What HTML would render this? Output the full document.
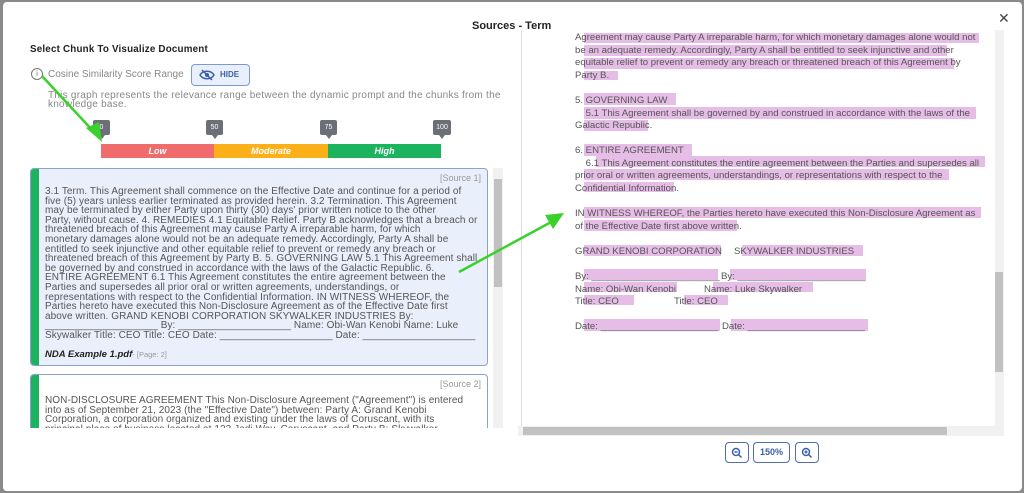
<!DOCTYPE html>
<html><head><meta charset="utf-8"><style>
*{margin:0;padding:0;box-sizing:border-box}
body{width:1024px;height:493px;background:#8a8a8a;position:relative;overflow:hidden;font-family:"Liberation Sans",sans-serif}
.modal{position:absolute;left:3px;top:2px;width:1019px;height:489px;background:#fff;border-radius:4px}
.a{position:absolute;white-space:nowrap}
.card{position:absolute;left:30px;width:458px;border:1px solid #8fa0d0;border-radius:4px;overflow:hidden}
.card .bar{position:absolute;left:0;top:0;bottom:0;width:8px;background:#1cb35e}
.ct{position:absolute;left:14px;font-size:10px;letter-spacing:0.08px;line-height:9.6px;color:#555;white-space:nowrap}
.pdf{font-size:9.6px;color:#555}
.hl{position:absolute;background:#e6bde6}
.btn{position:absolute;top:442px;height:21px;border:1px solid #4f6fb0;border-radius:4px;color:#3b5fa8;font-size:9px;font-weight:bold;text-align:center;line-height:19px}
.pin{position:absolute;top:120px;height:15px;background:#6b6f78;color:#fff;font-size:7px;text-align:center;line-height:15px;border-radius:2px}
.pin:after{content:"";position:absolute;left:50%;margin-left:-3px;bottom:-4px;border:3px solid transparent;border-top:4px solid #6b6f78;border-bottom:0}
</style></head><body>
<div class="modal"></div>
<div class="a" style="left:472px;top:20px;font-size:11px;font-weight:bold;color:#222">Sources - Term</div>
<div class="a" style="left:998px;top:10px;font-size:14px;color:#444">✕</div>

<div class="a" style="left:30px;top:44px;font-size:9.8px;letter-spacing:0.2px;font-weight:bold;color:#222">Select Chunk To Visualize Document</div>
<div class="a" style="left:31px;top:68px;width:12px;height:12px;border:1px solid #777;border-radius:50%;font-size:8px;color:#777;text-align:center;line-height:10px">i</div>
<div class="a" style="left:48px;top:69px;font-size:10px;color:#888">Cosine Similarity Score Range</div>
<div class="a" style="left:191px;top:64px;width:59px;height:22px;border:1px solid #7d9ad0;border-radius:4px;background:#eaf0fb;color:#3b5fa8;font-size:8px;font-weight:bold;line-height:20px;padding-left:28px">HIDE</div>
<svg class="a" style="left:199px;top:69px" width="16" height="12" viewBox="0 0 16 12"><path d="M1 6C4 1 12 1 15 6C12 11 4 11 1 6Z" fill="none" stroke="#3b5fa8" stroke-width="1.5"/><circle cx="8" cy="6" r="2" fill="#3b5fa8"/><path d="M3 1L13 11" stroke="#3b5fa8" stroke-width="1.5"/></svg>
<div class="a" style="left:48px;top:91px;font-size:10px;letter-spacing:0.25px;line-height:9px;color:#888">This graph represents the relevance range between the dynamic prompt and the chunks from the<br>knowledge base.</div>
<div class="pin" style="left:93px;width:17px">0</div>
<div class="pin" style="left:206px;width:17px">50</div>
<div class="pin" style="left:320px;width:17px">75</div>
<div class="pin" style="left:433px;width:18px">100</div>
<div class="a" style="left:101px;top:144px;width:113px;height:14px;background:#f06b6b;color:#fff;font-size:9px;font-weight:bold;font-style:italic;text-align:center;line-height:14px">Low</div>
<div class="a" style="left:214px;top:144px;width:114px;height:14px;background:#fbb019;color:#fff;font-size:9px;font-weight:bold;font-style:italic;text-align:center;line-height:14px">Moderate</div>
<div class="a" style="left:328px;top:144px;width:113px;height:14px;background:#1cb35e;color:#fff;font-size:9px;font-weight:bold;font-style:italic;text-align:center;line-height:14px">High</div>

<div class="card" style="top:168px;height:198px;background:#e9effb"><div class="bar"></div>
<div class="a" style="right:6px;top:4px;font-size:9px;color:#999">[Source 1]</div>
<div class="ct" style="top:18px">3.1 Term. This Agreement shall commence on the Effective Date and continue for a period of<br>five (5) years unless earlier terminated as provided herein. 3.2 Termination. This Agreement<br>may be terminated by either Party upon thirty (30) days' prior written notice to the other<br>Party, without cause. 4. REMEDIES 4.1 Equitable Relief. Party B acknowledges that a breach or<br>threatened breach of this Agreement may cause Party A irreparable harm, for which<br>monetary damages alone would not be an adequate remedy. Accordingly, Party A shall be<br>entitled to seek injunctive and other equitable relief to prevent or remedy any breach or<br>threatened breach of this Agreement by Party B. 5. GOVERNING LAW 5.1 This Agreement shall<br>be governed by and construed in accordance with the laws of the Galactic Republic. 6.<br>ENTIRE AGREEMENT 6.1 This Agreement constitutes the entire agreement between the<br>Parties and supersedes all prior oral or written agreements, understandings, or<br>representations with respect to the Confidential Information. IN WITNESS WHEREOF, the<br>Parties hereto have executed this Non-Disclosure Agreement as of the Effective Date first<br>above written. GRAND KENOBI CORPORATION SKYWALKER INDUSTRIES By:<br>____________________ By: ____________________ Name: Obi-Wan Kenobi Name: Luke<br>Skywalker Title: CEO Title: CEO Date: ____________________ Date: ____________________</div>
<div class="a" style="left:14px;top:180px;font-size:9.5px;color:#222"><b><i>NDA Example 1.pdf</i></b><span style="color:#999;font-size:7.5px">- [Page: 2]</span></div>
</div>
<div class="card" style="top:374px;height:70px;background:#fff"><div class="bar"></div>
<div class="a" style="right:6px;top:4px;font-size:9px;color:#999">[Source 2]</div>
<div class="ct" style="top:21px">NON-DISCLOSURE AGREEMENT This Non-Disclosure Agreement ("Agreement") is entered<br>into as of September 21, 2023 (the "Effective Date") between: Party A: Grand Kenobi<br>Corporation, a corporation organized and existing under the laws of Coruscant, with its<br>principal place of business located at 123 Jedi Way, Coruscant, and Party B: Skywalker</div>
</div>
<div class="a" style="left:3px;top:428px;width:517px;height:63px;background:#fff;border-radius:0 0 0 4px"></div>
<div class="a" style="left:493px;top:168px;width:10px;height:260px;background:#f1f1f1"></div>
<div class="a" style="left:494px;top:179px;width:8px;height:108px;background:#c1c1c1"></div>

<div class="a" style="left:521px;top:30px;width:1px;height:396px;background:#ddd"></div>
<div class="a" style="left:995px;top:30px;width:9px;height:396px;background:#f1f1f1"></div>
<div class="a" style="left:995px;top:272px;width:8px;height:100px;background:#c1c1c1"></div>
<div class="a" style="left:518px;top:426px;width:486px;height:10px;background:#f1f1f1"></div>
<div class="a" style="left:523px;top:427px;width:424px;height:8px;background:#c1c1c1"></div>

<div class="hl" style="left:584px;top:33px;width:395px;height:10px"></div>
<div class="hl" style="left:584px;top:45px;width:363px;height:11px"></div>
<div class="hl" style="left:584px;top:58px;width:370px;height:11px"></div>
<div class="hl" style="left:584px;top:71px;width:34px;height:9px"></div>
<div class="hl" style="left:584px;top:93px;width:92px;height:12px"></div>
<div class="hl" style="left:584px;top:107px;width:392px;height:12px"></div>
<div class="hl" style="left:584px;top:120px;width:64px;height:11px"></div>
<div class="hl" style="left:584px;top:144px;width:108px;height:12px"></div>
<div class="hl" style="left:596px;top:156px;width:389px;height:11px"></div>
<div class="hl" style="left:584px;top:169px;width:365px;height:11px"></div>
<div class="hl" style="left:584px;top:182px;width:90px;height:10px"></div>
<div class="hl" style="left:584px;top:207px;width:397px;height:11px"></div>
<div class="hl" style="left:584px;top:220px;width:153px;height:11px"></div>
<div class="hl" style="left:584px;top:245px;width:137px;height:11px"></div>
<div class="hl" style="left:742px;top:245px;width:121px;height:11px"></div>
<div class="hl" style="left:584px;top:269px;width:134px;height:11px"></div>
<div class="hl" style="left:730px;top:269px;width:136px;height:11px"></div>
<div class="hl" style="left:584px;top:282px;width:93px;height:10px"></div>
<div class="hl" style="left:713px;top:282px;width:100px;height:10px"></div>
<div class="hl" style="left:584px;top:295px;width:50px;height:10px"></div>
<div class="hl" style="left:684px;top:295px;width:44px;height:10px"></div>
<div class="hl" style="left:584px;top:319px;width:136px;height:12px"></div>
<div class="hl" style="left:731px;top:319px;width:137px;height:12px"></div>

<div class="a pdf" style="left:575px;top:32px;line-height:12.6px">Agreement may cause Party A irreparable harm, for which monetary damages alone would not<br>be an adequate remedy. Accordingly, Party A shall be entitled to seek injunctive and other<br>equitable relief to prevent or remedy any breach or threatened breach of this Agreement by<br>Party B.</div>
<div class="a pdf" style="left:575px;top:95px;line-height:12.6px">5. GOVERNING LAW<br>&nbsp;&nbsp;&nbsp;&nbsp;5.1 This Agreement shall be governed by and construed in accordance with the laws of the<br>Galactic Republic.</div>
<div class="a pdf" style="left:575px;top:145px;line-height:12.6px">6. ENTIRE AGREEMENT<br>&nbsp;&nbsp;&nbsp;&nbsp;6.1 This Agreement constitutes the entire agreement between the Parties and supersedes all<br>prior oral or written agreements, understandings, or representations with respect to the<br>Confidential Information.</div>
<div class="a pdf" style="left:575px;top:208px;line-height:12.6px">IN WITNESS WHEREOF, the Parties hereto have executed this Non-Disclosure Agreement as<br>of the Effective Date first above written.</div>
<div class="a pdf" style="left:575px;top:246px">GRAND KENOBI CORPORATION</div>
<div class="a pdf" style="left:734px;top:246px">SKYWALKER INDUSTRIES</div>
<div class="a pdf" style="left:575px;top:271px;line-height:12.6px">By: ________________________<br>Name: Obi-Wan Kenobi<br>Title: CEO</div>
<div class="a pdf" style="left:721px;top:271px">By: ________________________</div>
<div class="a pdf" style="left:704px;top:284px">Name: Luke Skywalker</div>
<div class="a pdf" style="left:674px;top:296px">Title: CEO</div>
<div class="a pdf" style="left:575px;top:321px">Date: ______________________</div>
<div class="a pdf" style="left:722px;top:321px">Date: ______________________</div>

<div class="btn" style="left:725px;width:24px"><svg width="12" height="12" viewBox="0 0 12 12" style="margin-top:4px"><circle cx="5" cy="5" r="3.5" fill="none" stroke="#3b5fa8" stroke-width="1.5"/><path d="M3.5 5H6.5M7.5 7.5L10.5 10.5" stroke="#3b5fa8" stroke-width="1.5"/></svg></div>
<div class="btn" style="left:753px;width:37px">150%</div>
<div class="btn" style="left:795px;width:24px"><svg width="12" height="12" viewBox="0 0 12 12" style="margin-top:4px"><circle cx="5" cy="5" r="3.5" fill="none" stroke="#3b5fa8" stroke-width="1.5"/><path d="M3.5 5H6.5M5 3.5V6.5M7.5 7.5L10.5 10.5" stroke="#3b5fa8" stroke-width="1.5"/></svg></div>

<svg class="a" style="left:0;top:0" width="1024" height="493">
<path d="M42 76L94 132" stroke="#3ad12a" stroke-width="2.5"/><path d="M86 128L102 142L99 122Z" fill="#3ad12a"/>
<path d="M459 272L553 221" stroke="#3ad12a" stroke-width="2.5"/><path d="M545 215L564 213L553 229Z" fill="#3ad12a"/>
</svg>
</body></html>
